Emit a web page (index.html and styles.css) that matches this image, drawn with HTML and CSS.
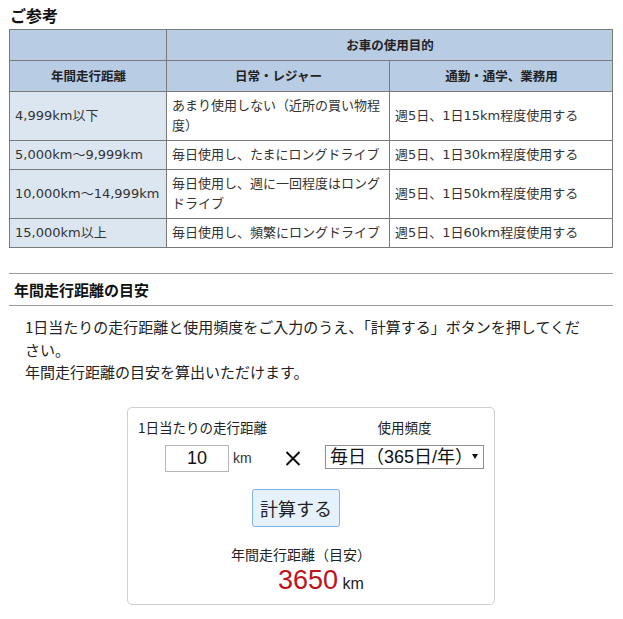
FILE: index.html
```html
<!DOCTYPE html>
<html lang="ja">
<head>
<meta charset="utf-8">
<link rel="stylesheet" href="styles.css">
</head>
<body>
<div class="page">
  <h2 class="title">ご参考</h2>
  <table class="ref">
    <tr class="head">
      <th class="c1"></th>
      <th colspan="2">お車の使用目的</th>
    </tr>
    <tr class="head">
      <th class="c1">年間走行距離</th>
      <th class="c2">日常・レジャー</th>
      <th class="c3">通勤・通学、業務用</th>
    </tr>
    <tr>
      <td class="km">4,999km以下</td>
      <td>あまり使用しない（近所の買い物程度）</td>
      <td>週5日、1日15km程度使用する</td>
    </tr>
    <tr>
      <td class="km">5,000km～9,999km</td>
      <td>毎日使用し、たまにロングドライブ</td>
      <td>週5日、1日30km程度使用する</td>
    </tr>
    <tr>
      <td class="km">10,000km～14,999km</td>
      <td>毎日使用し、週に一回程度はロングドライブ</td>
      <td>週5日、1日50km程度使用する</td>
    </tr>
    <tr>
      <td class="km">15,000km以上</td>
      <td>毎日使用し、頻繁にロングドライブ</td>
      <td>週5日、1日60km程度使用する</td>
    </tr>
  </table>

  <h3 class="sec">年間走行距離の目安</h3>
  <p class="lead">1日当たりの走行距離と使用頻度をご入力のうえ、「計算する」ボタンを押してください。<br>年間走行距離の目安を算出いただけます。</p>

  <div class="calc">
    <div class="grid">
      <div class="lab1">1日当たりの走行距離</div>
      <div class="lab2">使用頻度</div>
      <div class="inrow">
        <input class="num" type="text" value="10">
        <span class="unit">km</span>
        <svg class="times" width="16" height="15" viewBox="0 0 16 15"><path d="M1.5 1 L14.5 14 M14.5 1 L1.5 14" stroke="#111" stroke-width="2" fill="none"/></svg>
      </div>
      <div class="selwrap">
        <select class="sel"><option>毎日（365日/年）</option></select>
        <span class="arrow"></span>
      </div>
    </div>
    <div class="btnrow"><button class="btn">計算する</button></div>
    <div class="reslab">年間走行距離（目安）</div>
    <div class="res"><span class="val">3650</span> <span class="runit">km</span></div>
  </div>
</div>
</body>
</html>
```

FILE: styles.css
```css
html, body {
  margin: 0;
  padding: 0;
  background: #fff;
}
body {
  font-family: "DejaVu Sans", "Noto Sans CJK JP", sans-serif;
  color: #333;
}
.page {
  width: 604px;
  padding-left: 9px;
}
.title {
  margin: 0;
  padding: 5px 0 0 1px;
  height: 24px;
  font-family: "Noto Sans CJK JP", sans-serif;
  font-size: 16px;
  line-height: 20px;
  font-weight: bold;
  color: #111;
}
.ref {
  width: 604px;
  border-collapse: collapse;
  table-layout: fixed;
  font-size: 13px;
  line-height: 20px;
}
.ref th, .ref td {
  border: 1px solid #7a7a7a;
  padding: 4px 4px 4px 5px;
  vertical-align: middle;
}
.ref th {
  background: #b8cce4;
  font-weight: bold;
  color: #222;
  padding: 5px 4px 5px 5px;
  font-family: "Noto Sans CJK JP", sans-serif;
  font-size: 12.5px;
}
.ref .c1 { width: 147px; }
.ref .c2 { width: 212px; }
.ref td { background: #fff; }
.ref td.km { background: #dce6f1; padding-left: 5px; }

.sec {
  margin: 25px 0 0 0;
  border-top: 1px solid #9a9a9a;
  border-bottom: 1px solid #9a9a9a;
  padding: 5px 0 5px 5px;
  font-family: "Noto Sans CJK JP", sans-serif;
  font-size: 15px;
  line-height: 21px;
  font-weight: bold;
  color: #111;
}
.lead {
  margin: 10px 0 0 0;
  padding: 0 20px 0 16px;
  font-family: "Noto Sans CJK JP", sans-serif;
  font-size: 15px;
  line-height: 22.5px;
  color: #222;
}
.calc {
  box-sizing: border-box;
  width: 368px;
  height: 198px;
  margin: 23px 0 0 118px;
  border: 1px solid #cfcfcf;
  border-radius: 5px;
  font-family: "Liberation Sans", "Noto Sans CJK JP", sans-serif;
  color: #222;
}
.grid {
  display: grid;
  grid-template-columns: 197px 159px;
  grid-template-rows: 20px 27px;
  row-gap: 8px;
  padding-top: 9px;
}
.lab1 {
  padding-left: 10px;
  font-family: "Noto Sans CJK JP", sans-serif;
  font-size: 13.5px;
  line-height: 20px;
}
.lab2 {
  text-align: center;
  font-family: "Noto Sans CJK JP", sans-serif;
  font-size: 13.5px;
  line-height: 20px;
}
.inrow {
  display: flex;
  align-items: center;
}
.num {
  box-sizing: border-box;
  width: 64px;
  height: 27px;
  margin: 0 0 0 37px;
  border: 1px solid #b5b5b5;
  padding: 0;
  text-align: center;
  font-family: "Liberation Sans", sans-serif;
  font-size: 18px;
  color: #111;
  background: #fff;
}
.unit {
  margin-left: 4px;
  font-size: 14px;
  color: #333;
}
.times {
  margin-left: 33px;
}
.selwrap {
  position: relative;
  align-self: start;
}
.sel {
  -webkit-appearance: none;
  appearance: none;
  box-sizing: border-box;
  width: 159px;
  height: 24px;
  margin: 0;
  border: 1px solid #8f8f8f;
  border-radius: 0;
  padding: 0 0 0 4px;
  background: #fff;
  font-family: "Liberation Sans", "Noto Sans CJK JP", sans-serif;
  font-size: 18px;
  line-height: 22px;
  color: #111;
}
.arrow {
  position: absolute;
  right: 6px;
  top: 9px;
  width: 0;
  height: 0;
  border-left: 3px solid transparent;
  border-right: 3px solid transparent;
  border-top: 5px solid #111;
}
.btnrow {
  display: flex;
  padding-top: 17px;
  padding-left: 124px;
}
.btn {
  box-sizing: border-box;
  width: 88px;
  height: 38px;
  border: 1px solid #7eb4ea;
  border-radius: 3px;
  background: #e5f1fb;
  font-family: "Noto Sans CJK JP", sans-serif;
  font-size: 18px;
  color: #222;
  padding: 0;
}
.reslab {
  margin-top: 17px;
  text-align: center;
  padding-right: 20px;
  font-family: "Noto Sans CJK JP", sans-serif;
  font-size: 14px;
  line-height: 20px;
}
.res {
  text-align: center;
  padding-left: 20px;
  line-height: 30px;
  margin-top: 1px;
}
.val {
  font-size: 27px;
  color: #c0141b;
}
.runit {
  font-size: 16px;
  color: #222;
}
```
